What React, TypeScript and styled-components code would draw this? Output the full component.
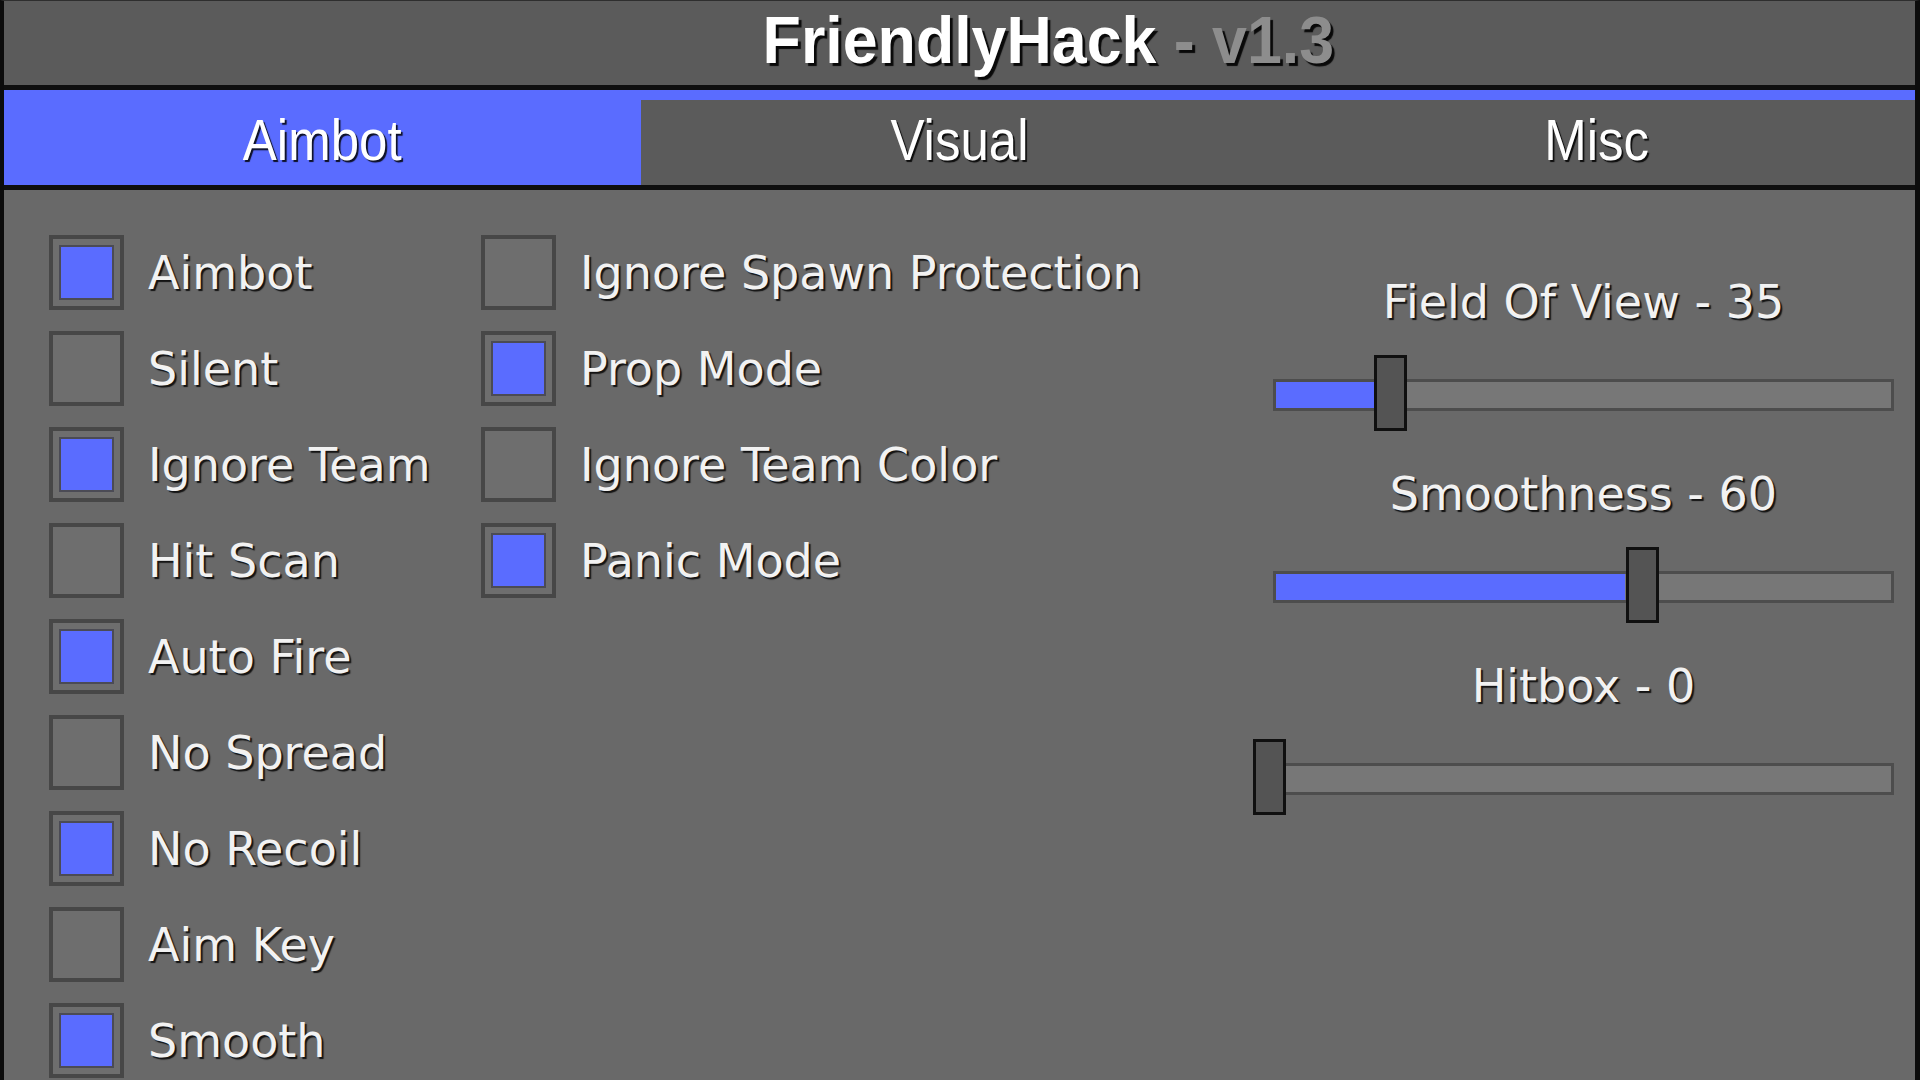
import React from "react";
import styled, { createGlobalStyle } from "styled-components";

const BLUE = "#5a6cff";

const GlobalStyle = createGlobalStyle`
  html, body {
    margin: 0;
    padding: 0;
    width: 1920px;
    height: 1080px;
    overflow: hidden;
    background: #696969;
  }
  * { box-sizing: border-box; }
`;

const Frame = styled.div`
  width: 1920px;
  height: 1080px;
  display: flex;
  flex-direction: column;
  background: #696969;
  border-left: 4px solid #0c0c0c;
  border-right: 5px solid #0c0c0c;
  border-top: 1px solid #2e2e2e;
  overflow: hidden;
`;

const TitleBar = styled.header`
  height: 89px;
  flex: none;
  background: #5b5b5b;
  border-bottom: 5px solid #0f0f0f;
  display: flex;
  align-items: center;
  padding-bottom: 7px;
`;

/* Three columns so the name stays centred and the version trails it */
const TitleText = styled.div`
  width: 100%;
  display: grid;
  grid-template-columns: 1fr auto 1fr;
  align-items: baseline;
  transform: scaleX(0.95);
  font-family: "Liberation Sans", Arial, sans-serif;
  font-weight: 700;
  font-size: 66px;
  line-height: 1;
  text-shadow: 3px 3px 1px rgba(0, 0, 0, 0.9);
`;

const AppName = styled.span`
  grid-column: 2;
  color: #ffffff;
`;

const Version = styled.span`
  grid-column: 3;
  color: #8d8d8d;
  white-space: pre;
`;

const TabBar = styled.nav`
  flex: none;
  display: grid;
  grid-template-columns: repeat(3, 1fr);
  background: ${BLUE};
  padding-top: 10px;
  border-bottom: 5px solid #0f0f0f;
`;

const Tab = styled.div<{ $active?: boolean }>`
  margin-top: ${(p) => (p.$active ? "-10px" : "0")};
  height: ${(p) => (p.$active ? "95px" : "85px")};
  padding-top: ${(p) => (p.$active ? "10px" : "0")};
  padding-bottom: 5px;
  background: ${(p) => (p.$active ? BLUE : "#5b5b5b")};
  display: flex;
  align-items: center;
  justify-content: center;
`;

const TabLabel = styled.span`
  display: inline-block;
  transform: scaleX(0.88);
  font-family: "Liberation Sans", Arial, sans-serif;
  font-size: 58px;
  line-height: 1;
  color: #ffffff;
  text-shadow: 2px 2px 1px rgba(0, 0, 0, 0.85);
`;

const Content = styled.main`
  flex: 1;
  display: flex;
  align-items: flex-start;
  padding: 45px 21px 0 45px;
`;

const CheckColumn = styled.div<{ $width?: number }>`
  display: flex;
  flex-direction: column;
  gap: 21px;
  width: ${(p) => (p.$width ? `${p.$width}px` : "auto")};
  flex: none;
`;

const CheckRow = styled.label`
  display: flex;
  align-items: center;
  gap: 24px;
  height: 75px;
`;

const Box = styled.span`
  width: 75px;
  height: 75px;
  flex: none;
  border: 4px solid #474747;
  background: #6e6e6e;
  padding: 6px;
  display: flex;
`;

const Fill = styled.span`
  flex: 1;
  background: ${BLUE};
  border: 2px solid #4b4b55;
`;

const Label = styled.span`
  font-family: "DejaVu Sans", Verdana, sans-serif;
  font-size: 46px;
  line-height: 54px;
  color: #f2f2f2;
  white-space: nowrap;
  text-shadow: 2px 2px 1px rgba(10, 10, 10, 0.9);
`;

const SliderPanel = styled.section`
  margin-left: auto;
  width: 621px;
  flex: none;
  padding-top: 40px;
  display: flex;
  flex-direction: column;
  gap: 36px;
`;

const SliderBlock = styled.div`
  display: flex;
  flex-direction: column;
  gap: 26px;
`;

const SliderLabel = styled(Label)`
  text-align: center;
`;

const SliderRow = styled.div`
  position: relative;
  height: 76px;
  padding-top: 24px;
`;

const Track = styled.div`
  height: 32px;
  background: #777777;
  border: 3px solid #4d4d4d;
  display: flex;
`;

const TrackFill = styled.div`
  height: 100%;
  background: ${BLUE};
`;

const Thumb = styled.div`
  position: absolute;
  top: 0;
  width: 33px;
  height: 76px;
  background: #545454;
  border: 3px solid #101010;
`;

type SliderProps = { label: string; value: number; max: number };

function Slider({ label, value, max }: SliderProps) {
  const frac = value / max;
  const offset = `calc(${(frac * 100).toFixed(3)}% - 20px)`;
  return (
    <SliderBlock>
      <SliderLabel>
        {label} - {value}
      </SliderLabel>
      <SliderRow>
        <Track>
          <TrackFill style={{ width: `max(0px, ${offset})` }} />
        </Track>
        <Thumb style={{ left: offset }} />
      </SliderRow>
    </SliderBlock>
  );
}

type Option = { name: string; on: boolean };

const primary: Option[] = [
  { name: "Aimbot", on: true },
  { name: "Silent", on: false },
  { name: "Ignore Team", on: true },
  { name: "Hit Scan", on: false },
  { name: "Auto Fire", on: true },
  { name: "No Spread", on: false },
  { name: "No Recoil", on: true },
  { name: "Aim Key", on: false },
  { name: "Smooth", on: true },
];

const secondary: Option[] = [
  { name: "Ignore Spawn Protection", on: false },
  { name: "Prop Mode", on: true },
  { name: "Ignore Team Color", on: false },
  { name: "Panic Mode", on: true },
];

function Check({ name, on }: Option) {
  return (
    <CheckRow>
      <Box>{on && <Fill />}</Box>
      <Label>{name}</Label>
    </CheckRow>
  );
}

export default function App() {
  return (
    <>
      <GlobalStyle />
      <Frame>
        <TitleBar>
          <TitleText>
            <AppName>FriendlyHack</AppName>
            <Version> - v1.3</Version>
          </TitleText>
        </TitleBar>
        <TabBar>
          <Tab $active>
            <TabLabel>Aimbot</TabLabel>
          </Tab>
          <Tab>
            <TabLabel>Visual</TabLabel>
          </Tab>
          <Tab>
            <TabLabel>Misc</TabLabel>
          </Tab>
        </TabBar>
        <Content>
          <CheckColumn $width={432}>
            {primary.map((o) => (
              <Check key={o.name} {...o} />
            ))}
          </CheckColumn>
          <CheckColumn>
            {secondary.map((o) => (
              <Check key={o.name} {...o} />
            ))}
          </CheckColumn>
          <SliderPanel>
            <Slider label="Field Of View" value={35} max={180} />
            <Slider label="Smoothness" value={60} max={100} />
            <Slider label="Hitbox" value={0} max={10} />
          </SliderPanel>
        </Content>
      </Frame>
    </>
  );
}
